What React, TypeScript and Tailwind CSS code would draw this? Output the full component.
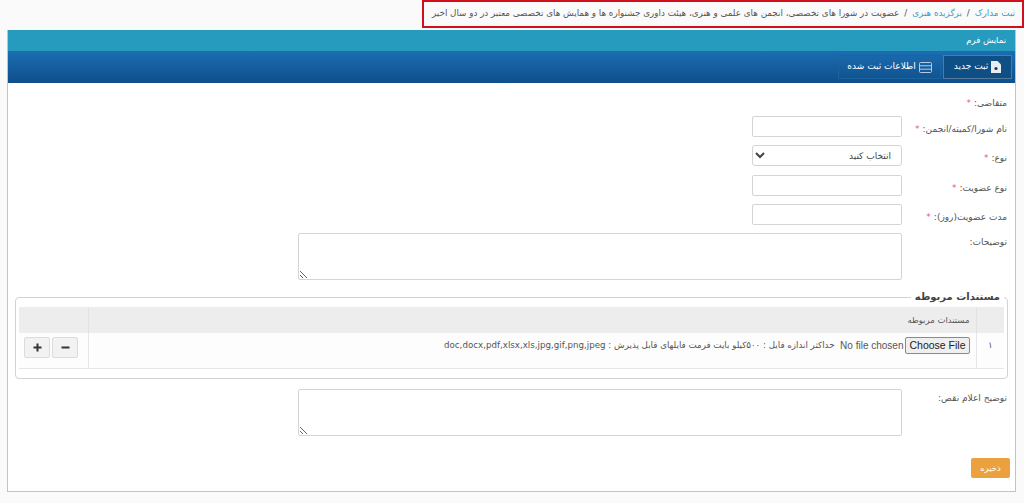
const FONT = "font-['DejaVu_Sans','Noto_Sans',sans-serif]";

function Required() {
  return <span className="mr-[3px] text-[#e0607a]">*</span>;
}

function FormRow({
  label,
  required,
  className,
  labelClass,
  children,
}: {
  label: string;
  required?: boolean;
  className?: string;
  labelClass?: string;
  children?: React.ReactNode;
}) {
  return (
    <div className={`flex items-start ${className ?? ''}`}>
      <label className={`w-[105px] shrink-0 text-[9px] leading-[14px] text-[#555] ${labelClass ?? 'pt-[6px]'}`}>
        {label}:{required && <Required />}
      </label>
      {children}
    </div>
  );
}

const inputClass = 'h-[21px] w-[150px] rounded-[2px] border border-[#d4d4d4] bg-white';

export default function App() {
  return (
    <div dir="rtl" className={`h-[503px] w-[1024px] overflow-hidden bg-[#fafafa] ${FONT}`}>
      {/* Breadcrumb, marked with a red box */}
      <div className="flex h-[30px] justify-start">
        <div className="flex h-[28px] w-[602px] items-center gap-[5px] border-[2px] border-[#d0101c] bg-[#fafafa] px-[7px] text-[8.75px] whitespace-nowrap text-[#555]">
          <span className="text-[#3a9cc4]">ثبت مدارک</span>
          <span>/</span>
          <span className="text-[#3a9cc4]">برگزیده هنری</span>
          <span>/</span>
          <span>
            عضویت در شورا های تخصصی، انجمن های علمی و هنری، هیئت داوری جشنواره ها و همایش های تخصصی معتبر در دو سال اخیر
          </span>
        </div>
      </div>

      {/* Panel */}
      <div className="mr-[8px] h-[462px] w-[1009px] border border-t-0 border-[#a9cbdc] bg-white">
        <div className="flex h-[21px] items-center bg-[#279bbd] px-[9px] text-[8.5px] text-white">
          نمایش فرم
        </div>

        {/* Tabs */}
        <div className="flex h-[32px] items-center gap-[2px] bg-gradient-to-b from-[#1b6db2] to-[#0f4f8b] pr-[3px]">
          <button className="flex h-[24px] w-[69px] items-center justify-center gap-[3px] border border-[#54799c] bg-[#0e4f86] text-[9px] text-white">
            <svg width="10" height="12" viewBox="0 0 10 12">
              <path d="M0 0h6.5L10 3.5V12H0z" fill="#e8edf2" />
              <circle cx="5" cy="7.5" r="1.6" fill="#234" />
            </svg>
            ثبت جدید
          </button>
          <button className="flex h-[24px] w-[103px] items-center justify-center gap-[3px] border border-[#1a639f] text-[9px] text-white">
            <svg width="13" height="11" viewBox="0 0 13 11" fill="none" stroke="#b7cbdc" strokeWidth="1">
              <rect x="0.5" y="0.5" width="12" height="10" rx="1" />
              <path d="M0.5 3.8h12M0.5 7.2h12" />
            </svg>
            اطلاعات ثبت شده
          </button>
        </div>

        {/* Form */}
        <div className="pr-[8px] pt-[13px]">
          <FormRow label="متقاضی" required className="h-[20px]" labelClass="pt-0" />
          <FormRow label="نام شورا/کمیته/انجمن" required className="h-[29px]">
            <input className={inputClass} />
          </FormRow>
          <FormRow label="نوع" required className="h-[30px]">
            <select className="h-[21px] w-[150px] rounded-[3px] border border-[#d4d4d4] bg-white px-[6px] text-[9px] text-[#444]">
              <option>انتخاب کنید</option>
            </select>
          </FormRow>
          <FormRow label="نوع عضویت" required className="h-[29px]">
            <input className={inputClass} />
          </FormRow>
          <FormRow label="مدت عضویت(روز)" required className="h-[29px]">
            <input className={inputClass} />
          </FormRow>
          <FormRow label="توضیحات" className="h-[58px]" labelClass="pt-[2px]">
            <textarea className="h-[47px] w-[604px] rounded-[2px] border border-[#d4d4d4] bg-white" />
          </FormRow>
        </div>

        {/* Related documents */}
        <fieldset className="mx-[7px] h-[88px] rounded-[4px] border border-[#d2d2d2] px-[3px] pt-[4px]">
          <legend className="px-[4px] text-[10px] leading-[12px] font-bold text-[#444]">مستندات مربوطه</legend>
          <table className="w-full border-collapse text-[8.7px] text-[#555]">
            <thead>
              <tr className="h-[26px] bg-[#eeeded]">
                <th className="w-[28px] border-l border-[#e2e2e2]" />
                <th className="border-l border-[#e2e2e2] pr-[6px] text-right text-[8.5px] font-normal">مستندات مربوطه</th>
                <th className="w-[69px]" />
              </tr>
            </thead>
            <tbody>
              <tr className="h-[35px] border-b border-[#e6e6e6] bg-[#fdfdfd]">
                <td className="border-l border-r-0 border-[#e6e6e6] pb-[9px] text-center">۱</td>
                <td className="border-l border-[#e6e6e6] pb-[9px] pr-[6px]">
                  <div className="flex items-center whitespace-nowrap">
                    <input
                      type="file"
                      className="ml-[-15px] w-[150px] shrink-0 font-['Liberation_Sans',sans-serif] text-[10px] text-[#555] file:ml-[2px] file:h-[17px] file:rounded-[2px] file:border file:border-[#8a8a8a] file:bg-[#efefef] file:px-[3px] file:text-[10.5px] file:text-[#222]"
                    />
                    <span>حداکثر اندازه فایل : ۵۰۰کیلو بایت فرمت فایلهای قابل پذیرش : doc,docx,pdf,xlsx,xls,jpg,gif,png,jpeg</span>
                  </div>
                </td>
                <td className="border-[#e6e6e6] pb-[5px]">
                  <div className="flex flex-row-reverse justify-start gap-[2px] pl-[5px]">
                    <button className="flex h-[21px] w-[26px] items-center justify-center rounded-[2px] border border-[#dcdcdc] bg-[#f2f2f2] text-[#333]">
                      <svg width="9" height="9" viewBox="0 0 9 9" stroke="currentColor" strokeWidth="2"><path d="M0.5 4.5h8M4.5 0.5v8" /></svg>
                    </button>
                    <button className="flex h-[21px] w-[26px] items-center justify-center rounded-[2px] border border-[#dcdcdc] bg-[#f2f2f2] text-[#333]">
                      <svg width="9" height="9" viewBox="0 0 9 9" stroke="currentColor" strokeWidth="2"><path d="M0.5 4.5h8" /></svg>
                    </button>
                  </div>
                </td>
              </tr>
            </tbody>
          </table>
        </fieldset>

        <div className="pr-[8px] pt-[10px]">
          <FormRow label="توضیح اعلام نقص" className="h-[65px]" labelClass="pt-[2px]">
            <textarea className="h-[47px] w-[604px] rounded-[2px] border border-[#d4d4d4] bg-white" />
          </FormRow>
          <button className="mr-[-3px] h-[20px] w-[39px] rounded-[2px] bg-[#eca13f] text-[8.5px] text-white">ذخیره</button>
        </div>
      </div>
    </div>
  );
}
